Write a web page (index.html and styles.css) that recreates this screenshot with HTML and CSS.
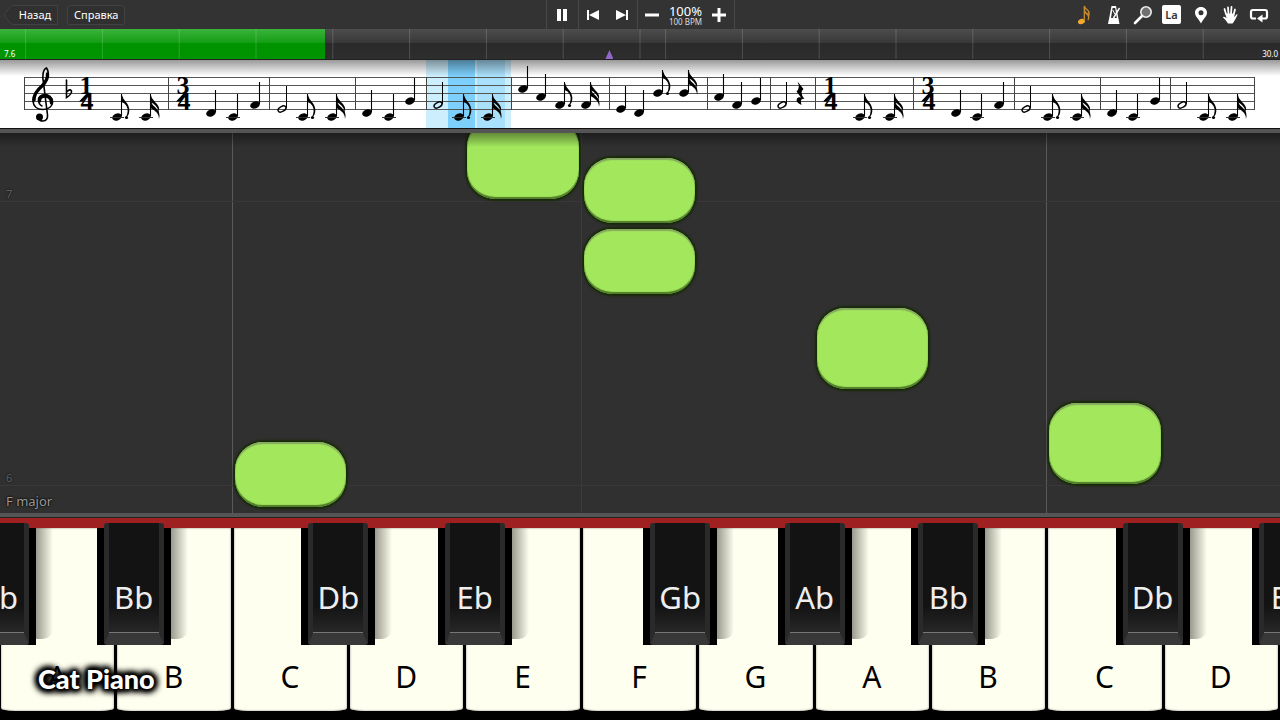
FILE: index.html
```html
<!DOCTYPE html>
<html lang="ru">
<head>
<meta charset="utf-8">
<title>Cat Piano</title>
<link rel="stylesheet" href="styles.css">
</head>
<body>
<header class="toolbar">
  <nav class="nav">
    <button class="back" type="button">
      <svg class="back-shape" viewBox="0 0 54 20" aria-hidden="true"><path d="M10 .5H53.500V19.500H10Q7 19.500 5.500 17L1 11.500Q0 10 1 8.500L5.500 3Q7 .5 10 .5Z"/></svg>
      <span>Назад</span>
    </button>
    <button class="help" type="button">Справка</button>
  </nav>
  <div class="transport">
    <button class="pause" type="button" aria-label="Pause"><svg width="12" height="14"><path d="M1 1h4v12H1zM7 1h4v12H7z" fill="#fff"/></svg></button>
    <div class="skips">
      <button type="button" aria-label="Previous"><svg width="12" height="10"><path d="M0 0h2v10H0zM12 0v10L2 5z" fill="#fff"/></svg></button>
      <button type="button" aria-label="Next"><svg width="12" height="10"><path d="M10 0h2v10h-2zM0 0v10l10-5z" fill="#fff"/></svg></button>
    </div>
    <div class="speed">
      <button type="button" aria-label="Slower"><svg width="14" height="14"><path d="M0 5.500h14v3H0z" fill="#fff"/></svg></button>
      <div class="tempo"><span class="percent">100%</span><span class="bpm">100 BPM</span></div>
      <button type="button" aria-label="Faster"><svg width="14" height="14"><path d="M0 5.500h5.500V0h3v5.500H14v3H8.500V14h-3V8.500H0z" fill="#fff"/></svg></button>
    </div>
  </div>
  <div class="tools">
    <button type="button" aria-label="Notes"><svg width="16" height="20" viewBox="0 0 16 20"><ellipse cx="4.500" cy="16.500" rx="3.600" ry="2.600" transform="rotate(-20 4.500 16.500)" fill="#f0a830"/><path d="M7.300 16V1Q8 4 11 5.500Q13 8 11.500 11.500Q11 8 7.500 7M7.500 5Q8 8.500 11 10Q12.500 12 11 15" fill="none" stroke="#c88c30" stroke-width="1.300"/></svg></button>
    <button type="button" aria-label="Metronome"><svg width="14" height="20" viewBox="0 0 14 20"><path d="M4.500 1h4.500L12.500 19H1z" fill="#fff"/><path d="M5.600 3h2.600l1.600 10H4z" fill="#333"/><path d="M6.500 13L12.500 3" stroke="#fff" stroke-width="1.500"/><path d="M5.800 5l2 4" stroke="#fff"/></svg></button>
    <button type="button" aria-label="Zoom"><svg width="20" height="20" viewBox="0 0 20 20"><path d="M2 18L9 11" stroke="#fff" stroke-width="2.600" stroke-linecap="round"/><circle cx="13" cy="7" r="5.200" fill="#707070" stroke="#eee" stroke-width="1.600"/></svg></button>
    <button type="button" class="la"><span>La</span></button>
    <button type="button" aria-label="Marker"><svg width="14" height="18" viewBox="0 0 14 18"><path fill-rule="evenodd" d="M7 1C3.500 1 1 3.500 1 6.800C1 10.500 4.500 12.500 7 17.500C9.500 12.500 13 10.500 13 6.800C13 3.500 10.500 1 7 1ZM7 4.300A2.500 2.500 0 1 1 7 9.300A2.500 2.500 0 1 1 7 4.300Z" fill="#fff"/></svg></button>
    <button type="button" aria-label="Hand"><svg width="16" height="20" viewBox="0 0 16 20"><path d="M4 9L2.500 4M6.500 9L6 2.500M9 9L9.500 2M11.500 10L13 4.500" stroke="#fff" stroke-width="1.800" stroke-linecap="round"/><path d="M3.300 8.500L12.300 8.500L12.200 12L15 9Q16 9 15 11Q12 17 10.500 18.500H6Q3.500 14.500 1 12.500Q1 11 4.500 13Z" fill="#fff"/></svg></button>
    <button type="button" aria-label="Loop"><svg width="20" height="16" viewBox="0 0 20 16"><path d="M7 11.500H4Q2 11.500 2 9.500V5Q2 3 4 3H16Q18 3 18 5V9.500Q18 11.500 16 11.500H12" fill="none" stroke="#fff" stroke-width="2.200"/><path d="M13.500 7.500V15.500L8 11.500z" fill="#fff"/></svg></button>
  </div>
</header>

<div class="timeline">
  <div class="played"></div>
  <svg class="ticks" width="100%" height="30" aria-hidden="true">
    <g stroke="#fff" stroke-opacity=".17">
      <line x1="2%" x2="2%" y2="30"/><line x1="8%" x2="8%" y2="30"/><line x1="14%" x2="14%" y2="30"/><line x1="20%" x2="20%" y2="30"/><line x1="26%" x2="26%" y2="30"/><line x1="32%" x2="32%" y2="30"/><line x1="38%" x2="38%" y2="30"/><line x1="44%" x2="44%" y2="30"/><line x1="50%" x2="50%" y2="30"/><line x1="52%" x2="52%" y2="30"/><line x1="58%" x2="58%" y2="30"/><line x1="64%" x2="64%" y2="30"/><line x1="70%" x2="70%" y2="30"/><line x1="76%" x2="76%" y2="30"/><line x1="82%" x2="82%" y2="30"/><line x1="88%" x2="88%" y2="30"/><line x1="94%" x2="94%" y2="30"/>
    </g>
  </svg>
  <div class="marker"></div>
  <div class="times"><span>7.6</span><span>30.0</span></div>
</div>

<section class="score">
<svg viewBox="0 59 1280 69" role="img" aria-label="Score">
  <defs>
    <ellipse id="head" rx="5" ry="3.500" transform="rotate(-22)"/>
    <g id="q"><use href="#head"/><path d="M4.500-1V-23" stroke="#000" stroke-width="1.100"/></g>
    <g id="h"><ellipse rx="4.300" ry="2.500" transform="rotate(-28)" fill="none" stroke="#000" stroke-width="1.400"/><path d="M4.500-1V-23" stroke="#000"/></g>
    <path id="ledger" d="M-7 .5H7" stroke="#333"/>
    <g id="e"><use href="#q"/><path d="M4.500-23Q6-18 9-15Q12.500-11 12.300-6Q12-1 9 0Q12-6 9.500-11Q8-14 4.500-15Z"/><circle cx="9.500" cy=".5" r="1.600"/></g>
    <g id="s"><use href="#q"/><path d="M4.500-23Q5-19 9-15Q14-11 13-5Q11-12 4.500-15ZM4.500-16Q6-12 10-9Q15-4 13 2Q13-5 4.500-9Z"/></g>
    <g id="ce"><use href="#e"/><use href="#ledger"/></g>
    <g id="cs"><use href="#s"/><use href="#ledger"/></g>
    <g id="cq"><use href="#q"/><use href="#ledger"/></g>
  </defs>
  <path d="M426 59h85v69h-85z" fill="#cceefd"/>
  <path d="M448 59h27v69h-27z" fill="#7dcffc"/>
  <path d="M477 59h28v69h-28z" fill="#a9e0fc"/>
  <path d="M24 77.500H1255M24 85.500H1255M24 93.500H1255M24 101.500H1255M24 109.500H1255" stroke="#555"/>
  <path d="M24.500 77V110M168.500 77V110M269.500 77V110M355.500 77V110M426.500 77V110M511.500 77V110M609.500 77V110M707.500 77V110M770.500 77V110M815.500 77V110M913.500 77V110M1014.500 77V110M1100.500 77V110M1170.500 77V110M1254.500 77V110" stroke="#444"/>
  <g fill="none" stroke="#000" stroke-linecap="round">
    <path d="M38 117C38 122 48.500 123.500 47.500 115L43.500 83C42 76 43 69 46.500 68C50 73 48 80 42 86C36 91 33 95 33 100C33 107 38 109.500 43 109.500C49 109.500 52.500 106 52.500 102C52.500 97 48 94.500 45 94.500C41 94.500 38.500 97 38.500 100C38.500 103 40 105 42 106" stroke-width="1.600"/>
    <path d="M47.500 74C48 79 45 83 42 86C36 91 34 95 34 100M51.500 103C52 98 48 96 45 96C41 96 39.500 98 39.500 101" stroke-width="3.400"/>
    <path d="M66.500 80V97.500Q72 94 71.500 91Q70.500 88.500 67 91.500" stroke-width="1.600"/>
  </g>
  <circle cx="39.500" cy="117" r="3.500"/>
  <g class="meter">
    <text x="86" y="94">1</text><text x="87" y="110">4</text>
    <text x="183" y="94">3</text><text x="184" y="110">4</text>
    <text x="830" y="94">1</text><text x="831" y="110">4</text>
    <text x="928" y="94">3</text><text x="929" y="110">4</text>
  </g>
  <path d="M79 101.500L87 93L89 94L83 101.500ZM176 101.500L184 93L188 94L180 101.500ZM823 101.500L831 93L833 94L827 101.500ZM921 101.500L929 93L933 94L925 101.500Z"/>
  <use href="#ce" x="117" y="117"/><use href="#cs" x="146" y="117"/>
  <use href="#q" x="211" y="113"/><use href="#cq" x="233" y="117"/><use href="#q" x="255" y="105"/>
  <use href="#h" x="282" y="109"/><use href="#ce" x="303" y="117"/><use href="#cs" x="332" y="117"/>
  <use href="#q" x="367" y="113"/><use href="#cq" x="389" y="117"/><use href="#q" x="410" y="101"/>
  <use href="#h" x="438" y="105"/><use href="#ce" x="459" y="117"/><use href="#cs" x="488" y="117"/>
  <use href="#q" x="523" y="89"/><use href="#q" x="541" y="97"/><use href="#e" x="560" y="105"/><use href="#s" x="586" y="105"/>
  <use href="#q" x="621" y="109"/><use href="#q" x="639" y="113"/><use href="#e" x="658" y="93"/><use href="#s" x="684" y="93"/>
  <use href="#q" x="719" y="97"/><use href="#q" x="737" y="105"/><use href="#q" x="756" y="101"/>
  <use href="#h" x="782" y="105"/>
  <path d="M797.500 81.500L803.500 89Q799 92.500 804.500 99Q799.500 97.500 801.500 105Q795 102 797 98.500Q798.500 96.500 801 97.500L796.500 91.500Q800.500 88 797.500 81.500Z"/>
  <use href="#ce" x="860" y="117"/><use href="#cs" x="890" y="117"/>
  <use href="#q" x="956" y="113"/><use href="#cq" x="977" y="117"/><use href="#q" x="999" y="105"/>
  <use href="#h" x="1026" y="109"/><use href="#ce" x="1048" y="117"/><use href="#cs" x="1077" y="117"/>
  <use href="#q" x="1112" y="113"/><use href="#cq" x="1133" y="117"/><use href="#q" x="1155" y="101"/>
  <use href="#h" x="1182" y="105"/><use href="#ce" x="1204" y="117"/><use href="#cs" x="1233" y="117"/>
</svg>
</section>

<main class="roll">
  <div class="column-line strong" style="--col:2"></div>
  <div class="column-line" style="--col:5"></div>
  <div class="column-line strong" style="--col:9"></div>
  <div class="beat" style="--y:56px"><span>7</span></div>
  <div class="beat" style="--y:340px"><span>6</span></div>
  <div class="note" style="--col:4;--y:-14px;--len:80px"></div>
  <div class="note" style="--col:5;--y:25px;--len:65px"></div>
  <div class="note" style="--col:5;--y:96px;--len:65px"></div>
  <div class="note" style="--col:7;--y:175px;--len:81px"></div>
  <div class="note" style="--col:9;--y:270px;--len:81px"></div>
  <div class="note" style="--col:2;--y:309px;--len:65px"></div>
  <div class="key-name">F major</div>
</main>

<section class="piano">
  <div class="felt"></div>
  <div class="whites">
    <button type="button">A</button><button type="button">B</button><button type="button">C</button><button type="button">D</button><button type="button">E</button><button type="button">F</button><button type="button">G</button><button type="button">A</button><button type="button">B</button><button type="button">C</button><button type="button">D</button>
  </div>
  <div class="blacks">
    <button type="button" style="left:-3%"><span>Ab</span></button>
    <button type="button" style="left:7.550%"><span>Bb</span></button>
    <button type="button" style="left:23.550%"><span>Db</span></button>
    <button type="button" style="left:34.200%"><span>Eb</span></button>
    <button type="button" style="left:50.250%"><span>Gb</span></button>
    <button type="button" style="left:60.750%"><span>Ab</span></button>
    <button type="button" style="left:71.200%"><span>Bb</span></button>
    <button type="button" style="left:87.150%"><span>Db</span></button>
    <button type="button" style="left:97.800%"><span>Eb</span></button>
  </div>
  <div class="brand">Cat Piano</div>
</section>
</body>
</html>
```
FILE: styles.css
```css
* { box-sizing: border-box; }
body {
  margin: 0;
  min-height: 100vh;
  display: flex;
  flex-direction: column;
  overflow: hidden;
  background: #303030;
  color: #fff;
  font-family: "Noto Sans", "Open Sans", sans-serif;
}
button {
  margin: 0;
  padding: 0;
  border: 0;
  background: none;
  color: inherit;
  font: inherit;
}
svg { display: block; }

/* Toolbar */
.toolbar {
  display: grid;
  grid-template-columns: 1fr auto 1fr;
  height: 29px;
  background: #333;
}
.nav { display: flex; align-items: center; gap: 9px; padding-left: 4px; font-size: 11px; }
.back { position: relative; width: 54px; height: 20px; padding-left: 8px; }
.back-shape { position: absolute; inset: 0; width: 54px; height: 20px; fill: #303030; stroke: #424242; }
.back span { position: relative; }
.help { height: 20px; padding: 0 6px; border: 1px solid #424242; border-radius: 3px; background: #303030; }
.transport { display: flex; }
.transport > * { display: flex; align-items: center; border-left: 1px solid #484848; }
.transport button { display: flex; align-items: center; justify-content: center; height: 29px; }
.pause { width: 32px; }
.skips button { width: 29px; }
.speed { border-right: 1px solid #484848; }
.speed button { width: 29px; }
.tempo { display: flex; flex-direction: column; align-items: center; width: 38px; white-space: nowrap; }
.percent { font-size: 13px; line-height: 13px; }
.bpm { font-size: 8px; line-height: 7px; color: #ddd; }
.tools { display: flex; align-items: center; justify-content: flex-end; padding-right: 7px; }
.tools button { display: flex; align-items: center; justify-content: center; width: 29px; height: 29px; }
.la span {
  width: 19px;
  height: 19px;
  border-radius: 2px;
  background: #fff;
  color: #333;
  font-size: 11px;
  font-weight: 600;
  line-height: 20px;
}

/* Timeline */
.timeline {
  position: relative;
  height: 30px;
  background: linear-gradient(#4d4d4d, #383838 45%, #292929 46%, #2e2e2e);
}
.played {
  width: 25.400%;
  height: 30px;
  background: linear-gradient(#3bb33b, #159e15 45%, #009300 46%, #009400);
}
.ticks { position: absolute; inset: 0; }
.marker {
  position: absolute;
  left: 47.300%;
  bottom: 0;
  width: 8px;
  height: 9px;
  background: #9068c8;
  clip-path: polygon(50% 0, 100% 100%, 0 100%);
}
.times {
  position: absolute;
  inset: auto 2px 0 4px;
  display: flex;
  justify-content: space-between;
  font-size: 8px;
  line-height: 11px;
}

/* Score */
.score {
  position: relative;
  background: #fff;
  border-bottom: 1px solid #111;
}
.score svg { width: 100%; }
.score::after {
  content: "";
  position: absolute;
  inset: 0 0 auto;
  height: 16px;
  border-top: 1px solid #222;
  background: linear-gradient(rgba(0, 0, 0, .4), transparent);
}
.meter { font: bold 26px "Liberation Serif", serif; text-anchor: middle; }

/* Falling notes */
.roll {
  position: relative;
  flex: 1;
  min-height: 380px;
  overflow: hidden;
  border-top: 4px solid #555;
  background: #303030;
}
.roll::after {
  content: "";
  position: absolute;
  inset: 0 0 auto;
  height: 14px;
  background: linear-gradient(rgba(0, 0, 0, .4), transparent);
}
.column-line {
  position: absolute;
  left: calc(100% * var(--col) / 11 - 1px);
  top: 0;
  bottom: 0;
  width: 1px;
  background: #3b3b3b;
}
.column-line.strong { background: #5a5a5a; }
.beat {
  position: absolute;
  top: var(--y);
  left: 0;
  right: 0;
  height: 13px;
  border-bottom: 1px solid #383838;
  color: #606060;
  font-size: 11px;
  line-height: 12px;
  padding-left: 6px;
  text-shadow: 0 0 2px #000;
}
.beat span { display: block; margin-top: -1px; }
.note {
  position: absolute;
  left: calc(100% * var(--col) / 11 + 2px);
  top: var(--y);
  width: calc(100% / 11 - 5px);
  height: var(--len);
  border-radius: 28px;
  background: #a2e75c;
  box-shadow: inset 0 2px 1px #86a860, inset 0 -2px 1px #4f7a2a, 0 0 2px 2px #182b08;
}
.key-name {
  position: absolute;
  left: 6px;
  bottom: 3px;
  color: #999;
  font-size: 13px;
  line-height: 18px;
  text-shadow: 0 0 2px #000, 0 0 2px #000;
}

/* Keyboard */
.piano {
  position: relative;
  height: 207px;
  padding-bottom: 9px;
  overflow: hidden;
  border-top: 4px solid #555;
  background: #000;
}
.felt { height: 11px; border-top: 1px solid #222; background: #9f2020; }
.whites { display: grid; grid-template-columns: repeat(11, 1fr); height: 183px; color: #000; }
.whites button {
  margin: 0 2px 0 1px;
  padding: 113px 1px 0 0;
  border-radius: 0 0 14px 14px / 0 0 3px 3px;
  background: #fffff0;
  box-shadow: inset 0 0 2px #777;
  font-size: 30px;
}
.blacks { position: absolute; inset: 6px 0 auto; }
.blacks button {
  position: absolute;
  top: 0;
  width: 74px;
  height: 122px;
  padding: 0 7px;
  background: linear-gradient(transparent 5px, #000 5px);
}
.blacks button::after {
  content: "";
  position: absolute;
  left: 74px;
  top: 5px;
  width: 17px;
  height: 111px;
  background: linear-gradient(90deg, rgba(70, 70, 60, .55), rgba(70, 70, 60, .25) 55%, transparent);
  border-radius: 0 0 10px 0;
}
.blacks span {
  display: flex;
  align-items: flex-end;
  justify-content: center;
  height: 122px;
  padding-bottom: 15px;
  border-style: solid;
  border-width: 0 5px 12px;
  border-color: #2a2a2a #2a2a2a #383838;
  border-radius: 3px;
  background: linear-gradient(#131313 75%, #282828);
  box-shadow: inset 0 -1px #777;
  font-size: 31px;
  white-space: nowrap;
  color: #eee;
}
.brand {
  position: absolute;
  left: 38px;
  bottom: 25px;
  font: 900 27px/32px Lato, sans-serif;
  text-shadow: 0 0 3px #000, 0 0 4px #000, 0 0 5px #000, 0 0 6px #000, 0 0 7px #000, 0 0 7px #000, 0 0 8px #000, 0 0 8px #000, 0 0 9px #000, 0 0 10px #000;
}
```
